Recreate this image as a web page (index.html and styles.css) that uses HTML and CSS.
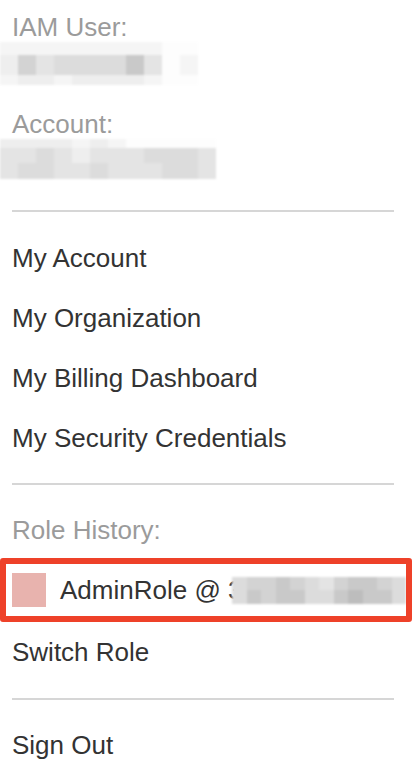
FILE: index.html
```html
<!DOCTYPE html>
<html>
<head>
<meta charset="utf-8">
<link rel="stylesheet" href="styles.css">
</head>
<body>
<div class="menu">
  <div class="label">IAM User:</div>
  <div class="mosaic m-user">
    <span class="s1"></span><span class="s1"></span><span class="s1"></span><span class="s1"></span><span class="s1"></span><span class="s1"></span><span class="s1"></span><span class="s1"></span><span class="s1"></span><span class="s0"></span><span class="s0"></span>
    <span class="s2"></span><span class="s5"></span><span class="s3"></span><span class="s4"></span><span class="s4"></span><span class="s4"></span><span class="s4"></span><span class="s6"></span><span class="s3"></span><span class="s0"></span><span class="s1"></span>
    <span class="s1"></span><span class="s2"></span><span class="s2"></span><span class="s1"></span><span class="s2"></span><span class="s2"></span><span class="s2"></span><span class="s2"></span><span class="s1"></span><span class="s0"></span><span class="s0"></span>
  </div>
  <div class="label">Account:</div>
  <div class="mosaic m-account">
    <span class="s2"></span><span class="s2"></span><span class="s2"></span><span class="s2"></span><span class="s1"></span><span class="s2"></span><span class="s1"></span><span class="s0"></span><span class="s0"></span><span class="s0"></span><span class="s0"></span><span class="s0"></span>
    <span class="s3"></span><span class="s3"></span><span class="s4"></span><span class="s3"></span><span class="s2"></span><span class="s3"></span><span class="s3"></span><span class="s3"></span><span class="s4"></span><span class="s4"></span><span class="s4"></span><span class="s3"></span>
    <span class="s3"></span><span class="s4"></span><span class="s4"></span><span class="s3"></span><span class="s3"></span><span class="s4"></span><span class="s3"></span><span class="s3"></span><span class="s3"></span><span class="s4"></span><span class="s4"></span><span class="s3"></span>
  </div>
  <hr class="sep first">
  <div class="item">My Account</div>
  <div class="item">My Organization</div>
  <div class="item">My Billing Dashboard</div>
  <div class="item">My Security Credentials</div>
  <hr class="sep">
  <div class="label role-label">Role History:</div>
  <div class="role">
    <span class="swatch"></span>
    <span class="role-text">AdminRole @ 3</span>
    <span class="mosaic m-role">
      <span class="s4"></span><span class="s5"></span><span class="s5"></span><span class="s6"></span><span class="s5"></span><span class="s4"></span><span class="s3"></span><span class="s5"></span><span class="s6"></span><span class="s6"></span><span class="s5"></span><span class="s4"></span>
      <span class="s4"></span><span class="s6"></span><span class="s5"></span><span class="s6"></span><span class="s6"></span><span class="s4"></span><span class="s4"></span><span class="s6"></span><span class="s7"></span><span class="s6"></span><span class="s6"></span><span class="s4"></span>
    </span>
  </div>
  <div class="item switch">Switch Role</div>
  <hr class="sep">
  <div class="item">Sign Out</div>
</div>
</body>
</html>
```

FILE: styles.css
```css
* { box-sizing: border-box; }
html, body {
  margin: 0;
  padding: 0;
  background: #ffffff;
}
body {
  font-family: "Liberation Sans", Arial, Helvetica, sans-serif;
  font-size: 26px;
  color: #333333;
  width: 420px;
  height: 774px;
  overflow: hidden;
}
.menu {
  padding: 12px 26px 0 12px;
}
.label {
  line-height: 30px;
  color: #9b9b9b;
}
.item {
  line-height: 30px;
  padding: 15px 0;
  color: #333333;
}
.sep {
  border: 0;
  height: 2px;
  background: #d6d6d6;
  margin: 15px 0 16px;
}
.sep.first {
  margin-top: 31px;
}
.switch + .sep {
  margin-top: 16px;
  margin-bottom: 15px;
}
.mosaic {
  display: grid;
  filter: blur(1.2px);
}
.m-user {
  margin-left: -12px;
  width: 198px;
  height: 43px;
  grid-template-columns: repeat(11, 18px);
  grid-template-rows: 13px 20px 10px;
  margin-bottom: 24px;
}
.m-account {
  margin-left: -12px;
  width: 216px;
  height: 40px;
  grid-template-columns: repeat(12, 18px);
  grid-template-rows: 9px 15px 16px;
}
.role-label {
  margin-top: 30px;
}
.role {
  display: flex;
  align-items: center;
  margin-top: 13px;
  margin-left: -12px;
  width: 412px;
  height: 64px;
  border: 6px solid #ee4129;
  border-radius: 3px;
  padding: 0 6px;
  overflow: hidden;
}
.swatch {
  width: 34px;
  height: 34px;
  background: #e8b3ae;
  flex: none;
}
.role-text {
  margin-left: 14px;
  line-height: 30px;
  white-space: nowrap;
  flex: none;
  color: #333333;
}
.m-role {
  flex: none;
  margin-left: -10px;
  width: 174px;
  height: 27px;
  grid-template-columns: repeat(12, 14.5px);
  grid-template-rows: 13px 14px;
  background: #ffffff;
}
.s0 { background: #fdfdfd; }
.s1 { background: #f5f5f5; }
.s2 { background: #eeeeee; }
.s3 { background: #e4e4e4; }
.s4 { background: #dcdcdc; }
.s5 { background: #d3d3d3; }
.s6 { background: #c9c9c9; }
.s7 { background: #bdbdbd; }
```
